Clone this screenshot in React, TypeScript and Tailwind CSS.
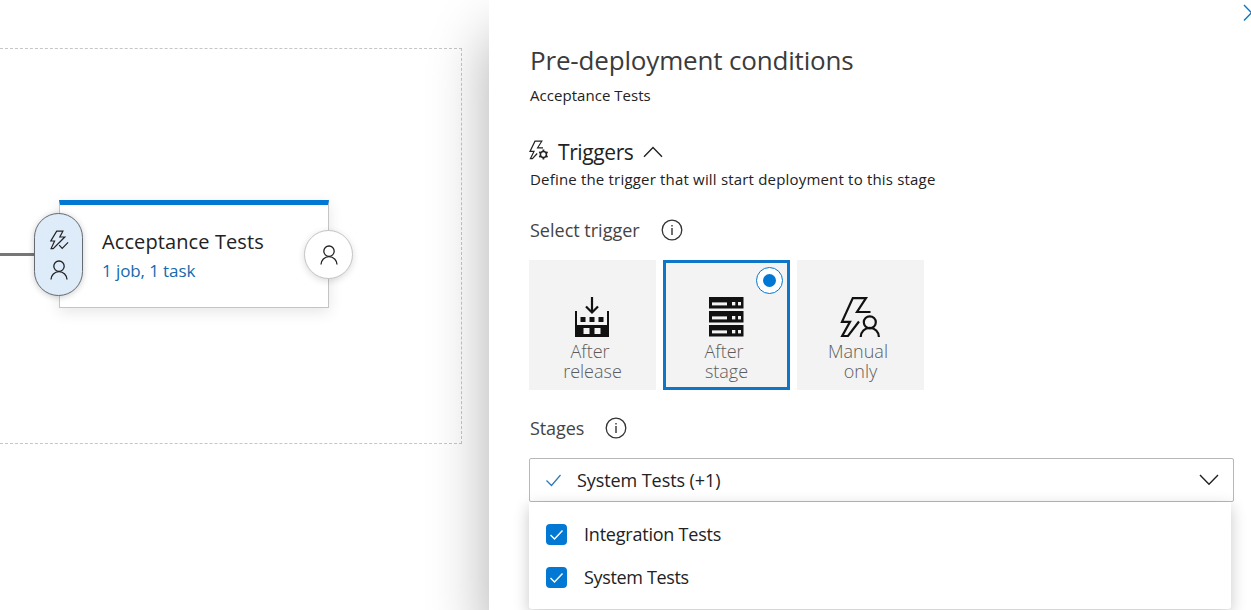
import React from "react";

function Person({ className }: { className: string }) {
  return (
    <svg viewBox="0 0 18 20" fill="none" stroke="#222" strokeWidth="1.3" className={className}>
      <circle cx="9" cy="6.2" r="5.2" />
      <path d="M1 19.6a8 8 0 0 1 16 0" />
    </svg>
  );
}

function BoltCheck() {
  return (
    <svg width="20" height="20" viewBox="0 0 20 20" fill="none" stroke="#222" strokeWidth="1.2" className="shrink-0">
      <path d="M7.7 1.2h6.2L10.8 7h5L4.2 18.6H2.1L5.6 11H1.8z" />
      <path d="M10.2 15.2l3 3.2 5.9-6" />
    </svg>
  );
}

function BoltGear() {
  return (
    <svg width="20" height="21" viewBox="0 0 20 21" fill="none" stroke="#222" strokeWidth="1.2" className="shrink-0">
      <path d="M14 7.8H8.6L12.8 1.2H6L1 11.4h4L1.4 18.7h2l4.8-5.2" />
      <circle cx="14.4" cy="14.5" r="3" strokeWidth="1.5" />
      <path d="M14.4 9.6v1.9M14.4 17.5v1.9M10.2 12.1l1.6.9M17 16l1.6.9M10.2 16.9l1.6-.9M17 13l1.6-.9" strokeWidth="1.8" />
    </svg>
  );
}

function Info() {
  return (
    <svg width="22" height="22" viewBox="0 0 22 22" fill="none" stroke="#333" strokeWidth="1.3" className="shrink-0">
      <circle cx="11" cy="11" r="9.8" />
      <path d="M11 9v7M11 6v1.5" strokeWidth="1.4" />
    </svg>
  );
}

function ReleaseIcon() {
  return (
    <svg width="36" height="42" viewBox="0 0 36 42" fill="#111" className="block shrink-0">
      <path d="M1 15h2v14h30V15h2v26H1z" />
      <path d="M9.5 32h6v6h-6zM20.5 32h6v6h-6z" fill="#f3f3f3" />
      <path d="M6.5 21h5v5h-5zM15.5 21h5v5h-5zM24.5 21h5v5h-5z" />
      <path d="M18 1v15M12 10.5l6 6 6-6" fill="none" stroke="#111" strokeWidth="2.2" />
    </svg>
  );
}

function ServerIcon() {
  return (
    <svg width="36" height="42" viewBox="0 0 36 42" className="block shrink-0">
      {[1, 15, 29].map((y) => (
        <g key={y} fill="#f3f3f3">
          <rect x="1" y={y} width="34.5" height="11.5" fill="#111" />
          <rect x="4" y={y + 5.4} width="15" height="3" />
          <rect x="24" y={y + 5} width="3.3" height="3.4" />
          <rect x="30" y={y + 5} width="3" height="3.4" />
        </g>
      ))}
    </svg>
  );
}

function ManualIcon() {
  return (
    <svg width="42" height="42" viewBox="0 0 42 42" fill="none" stroke="#111" strokeWidth="2.2" className="block shrink-0">
      <path d="M31.5 16H18L27 2.1H13.8L3 25.9h8L3.2 40H9l11-14.5" />
      <circle cx="30.8" cy="26.3" r="6" />
      <path d="M21.7 41a9.1 9.1 0 0 1 18.2 0" />
    </svg>
  );
}

function Checkbox() {
  return (
    <span className="flex size-[21px] shrink-0 items-center justify-center rounded-[4px] bg-[#0078d4]">
      <svg width="15" height="12" viewBox="0 0 15 12" fill="none" stroke="white" strokeWidth="1.4">
        <path d="M1.5 6l4 4L13.5 1.5" />
      </svg>
    </span>
  );
}

function TriggerCard({ icon, first, second, selected }: {
  icon: React.ReactNode;
  first: string;
  second: string;
  selected?: boolean;
}) {
  return (
    <div
      className={`relative flex h-[130px] w-[127px] flex-col items-center border-[3px] bg-[#f3f3f3] pt-[33px] text-[18px] leading-5 font-[350] text-[#5c5c5c] ${selected ? "border-[#0f75c7]" : "border-[#f3f3f3]"}`}
    >
      <span className="-ml-px">{icon}</span>
      <span className="mt-[3px] -ml-[5px]">{first}</span>
      <span>{second}</span>
      {selected && (
        <span className="absolute top-[4px] right-[4px] flex size-[27px] items-center justify-center rounded-full border border-[#0078d4] bg-white">
          <span className="size-[13px] rounded-full bg-[#0078d4]" />
        </span>
      )}
    </div>
  );
}

export default function App() {
  return (
    <div className="flex h-[610px] w-[1251px] overflow-hidden bg-white font-['Open_Sans','Noto_Sans',sans-serif] font-[370] text-[#222]">
      <section className="h-full w-[489px] shrink-0 pt-12">
        <div className="flex h-[396px] w-[462px] border border-l-0 border-dashed border-[#c6c6c6] pt-[151px]">
          <div className="mt-[53px] h-[3px] w-[34px] shrink-0 bg-[#777]" />
          <div className="relative z-10 mt-[13px] -mr-6 flex h-[83px] w-[49px] shrink-0 flex-col items-center gap-[10px] rounded-full border border-[#666b73] bg-[#deecf9] pt-4 shadow-[0_1px_6px_rgba(0,0,0,0.2)]">
            <BoltCheck />
            <Person className="h-[20px] w-[18px] shrink-0" />
          </div>
          <div className="h-[108px] w-[270px] shrink-0 border border-t-[5px] border-[#c4c4c4] border-t-[#0078d4] bg-white pt-[23px] pl-[42px] shadow-[0_4px_14px_rgba(0,0,0,0.1)]">
            <div className="text-[20px] leading-7 whitespace-nowrap tracking-[0.1px]">Acceptance Tests</div>
            <div className="mt-[3px] text-[17px] leading-6 whitespace-nowrap tracking-[-0.1px] text-[#1769ad]">1 job, 1 task</div>
          </div>
          <div className="relative mt-[30px] -ml-[25px] flex size-[49px] shrink-0 items-center justify-center rounded-full border border-[#c4c4c4] bg-white shadow-[0_2px_7px_rgba(0,0,0,0.14)]">
            <Person className="h-[20px] w-[18px]" />
          </div>
        </div>
      </section>

      <main className="relative flex h-full w-[762px] shrink-0 flex-col bg-white pt-11 pl-10 shadow-[0_36px_56px_rgba(0,0,0,0.32)]">
        <svg width="10" height="18" viewBox="0 0 10 18" fill="none" stroke="#0f75c7" strokeWidth="1.4" className="absolute top-1 right-[-1px]">
          <path d="M2 1l7.5 7.7L2 16.5" />
        </svg>
        <h1 className="h-8 pl-px text-[26px] leading-8 whitespace-nowrap tracking-[-0.17px] text-[#3b3b3b]">Pre-deployment conditions</h1>
        <div className="mt-[9px] h-5 pl-px text-[15px] leading-5 tracking-[0.04px]">Acceptance Tests</div>

        <div className="mt-[33px] flex h-7 items-center">
          <div className="-mt-[3px]"><BoltGear /></div>
          <h2 className="ml-[9px] w-[76px] text-[21px] leading-7 whitespace-nowrap tracking-[-0.4px]">Triggers</h2>
          <svg width="20" height="12" viewBox="0 0 20 12" fill="none" stroke="#222" strokeWidth="1.4" className="ml-[9px]">
            <path d="M1 10.8L10 1.5l9 9.3" />
          </svg>
        </div>
        <p className="mt-[3px] h-5 pl-px text-[15px] leading-5 whitespace-nowrap tracking-[0.185px]">Define the trigger that will start deployment to this stage</p>

        <div className="mt-[27px] flex h-7 items-center text-[#444]">
          <span className="w-[132px] pl-px text-[18px] whitespace-nowrap">Select trigger</span>
          <Info />
        </div>

        <div className="mt-[16px] flex gap-[7px]">
          <TriggerCard icon={<ReleaseIcon />} first="After" second="release" />
          <TriggerCard icon={<ServerIcon />} first="After" second="stage" selected />
          <TriggerCard icon={<ManualIcon />} first="Manual" second="only" />
        </div>

        <div className="mt-[24px] flex h-7 items-center text-[#444]">
          <span className="w-[76px] pl-px text-[18px] tracking-[-0.1px]">Stages</span>
          <Info />
        </div>

        <div className="mt-4 flex h-[44px] w-[705px] shrink-0 items-center rounded-[2px] border border-[#b8b8b8] pr-[14px] pl-[15px] text-[18px]">
          <svg width="17" height="14" viewBox="0 0 17 14" fill="none" stroke="#2a78b8" strokeWidth="1.2">
            <path d="M1.5 7.5l5 5L15.5 2" />
          </svg>
          <span className="ml-[15px] whitespace-nowrap tracking-[-0.08px]">System Tests (+1)</span>
          <svg width="20" height="12" viewBox="0 0 20 12" fill="none" stroke="#222" strokeWidth="1.4" className="ml-auto">
            <path d="M1 1l9 9.3L19 1" />
          </svg>
        </div>
        <div className="flex h-[107px] w-[702px] shrink-0 flex-col rounded-b-[3px] bg-white pt-[11px] pl-[17px] text-[18px] tracking-[-0.22px] shadow-[0_5px_16px_rgba(0,0,0,0.22)]">
          <div className="flex h-[43px] items-center gap-[17px]"><Checkbox /><span>Integration Tests</span></div>
          <div className="flex h-[43px] items-center gap-[17px] tracking-[-0.35px]"><Checkbox /><span>System Tests</span></div>
        </div>
      </main>
    </div>
  );
}
